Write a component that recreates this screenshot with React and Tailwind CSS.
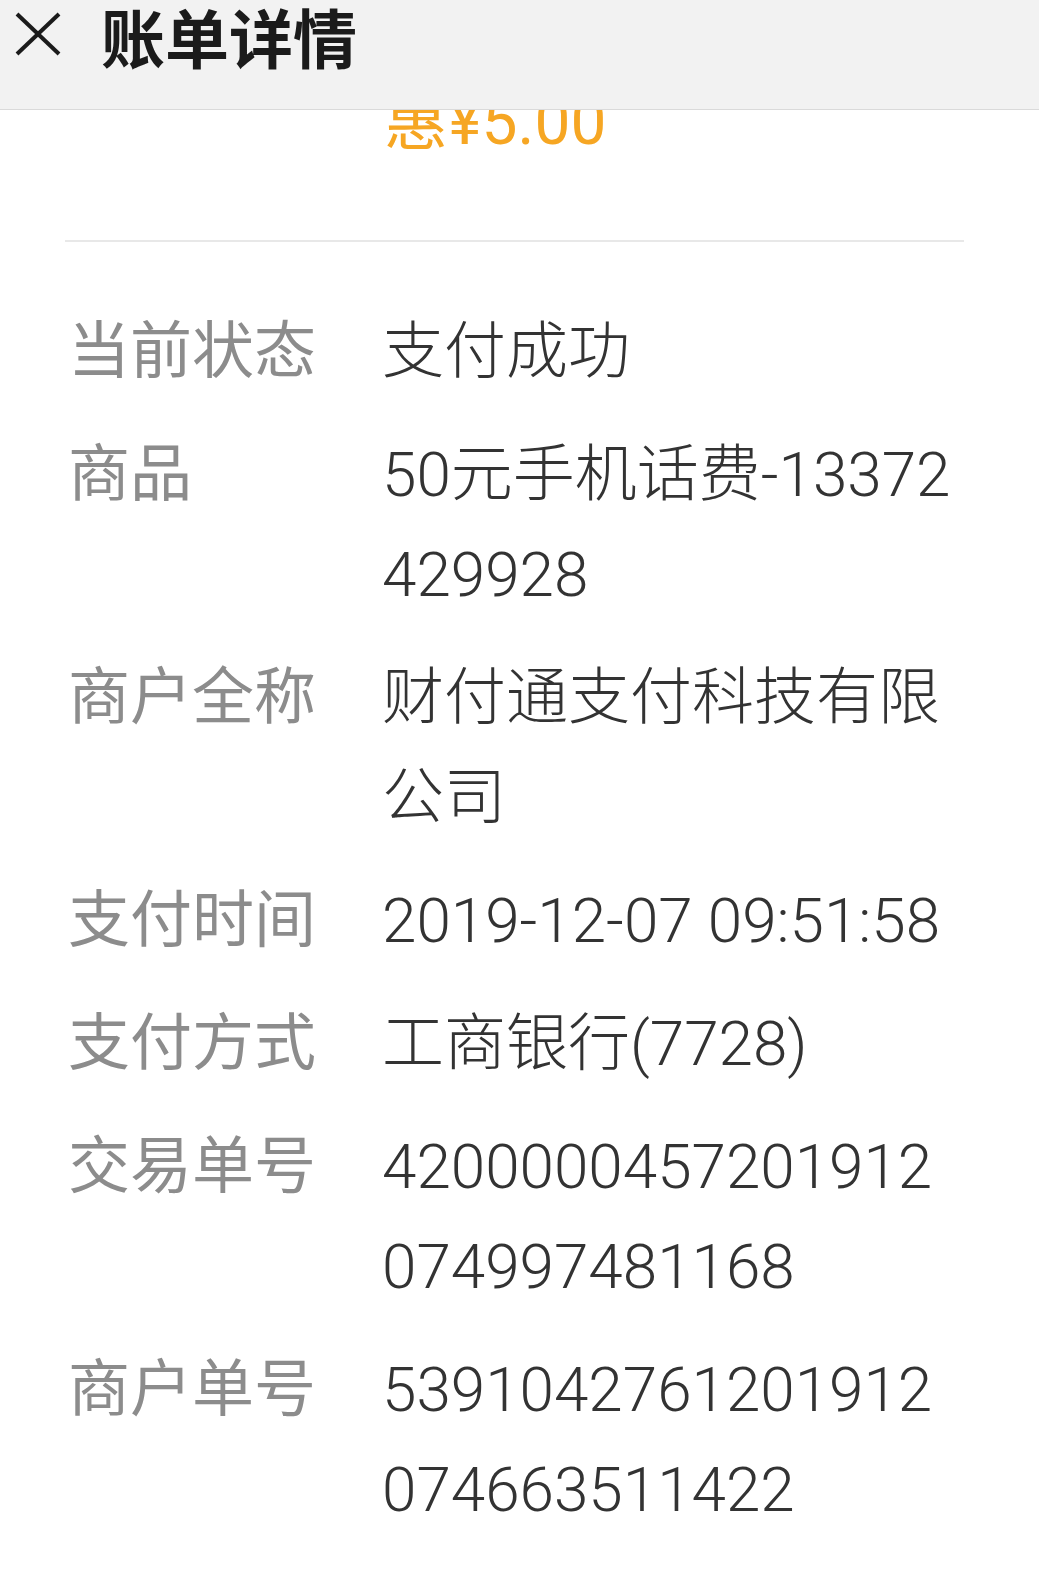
import React from "react";

const rows = [
    { label: "当前状态", lines: ["支付成功"] },
    { label: "商品", lines: ["50元手机话费-13372", "429928"] },
    { label: "商户全称", lines: ["财付通支付科技有限", "公司"] },
    { label: "支付时间", lines: ["2019-12-07 09:51:58"] },
    { label: "支付方式", lines: ["工商银行(7728)"] },
    { label: "交易单号", lines: ["4200000457201912", "074997481168"] },
    { label: "商户单号", lines: ["5391042761201912", "074663511422"] },
];

export default function App() {
    return (
        <div className="min-h-[1594px] bg-white" style={{ fontFamily: 'Roboto, "Noto Sans CJK SC", sans-serif' }}>
            {/* Header */}
            <header className="relative z-10 flex items-start h-[110px] bg-[#f2f2f2] border-b border-[#dadada]">
                <svg width="46" height="44" viewBox="0 0 46 44" className="ml-[15px] mt-[12px] shrink-0">
                    <line x1="2" y1="2" x2="44" y2="42" stroke="#1b1b1b" strokeWidth="4" />
                    <line x1="44" y1="2" x2="2" y2="42" stroke="#1b1b1b" strokeWidth="4" />
                </svg>
                <h1
                    className="ml-[40px] mt-[2px] text-[64px] leading-[66px] font-bold text-[#1b1b1b]"
                    style={{ fontFamily: '"Noto Sans CJK SC", sans-serif' }}
                >
                    账单详情
                </h1>
            </header>

            {/* Discount amount, scrolled under the header */}
            <div className="-mt-[20px] pl-[384px] text-[64px] leading-[66px] text-[#f6a623]">
                惠¥5.00
            </div>

            <div className="ml-[65px] mr-[75px] mt-[84px] h-[2px] bg-[#e8e8e8]"></div>

            {/* Detail rows */}
            <div className="flex flex-col gap-[23px] pt-[60px] pl-[68px] pb-[60px]">
                {rows.map((row) => (
                    <div key={row.label} className="flex text-[62px] leading-[100px]">
                        <div className="w-[314px] shrink-0 text-[#8c8c8c]">{row.label}</div>
                        <div className="text-[#333333] font-light">
                            {row.lines.map((line) => (
                                <div key={line} className="whitespace-nowrap">{line}</div>
                            ))}
                        </div>
                    </div>
                ))}
            </div>
        </div>
    );
}
